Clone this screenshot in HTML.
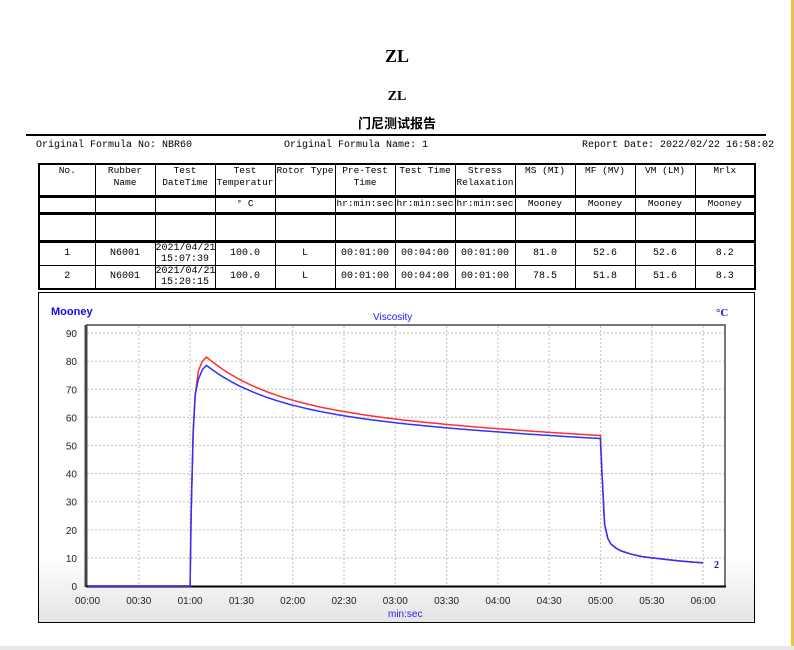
<!DOCTYPE html>
<html><head><meta charset="utf-8"><style>
*{margin:0;padding:0;box-sizing:border-box}
body{width:794px;height:650px;background:#fff;position:relative;overflow:hidden;font-family:"Liberation Mono","Noto Serif CJK SC",monospace;color:#000}
.abs{position:absolute}
.t1{left:0;width:794px;text-align:center;font-family:"Liberation Serif",serif;font-weight:bold}
table{position:absolute;left:38px;top:163px;width:717px;border-collapse:collapse;font-size:9.5px;table-layout:fixed}
td{border:1px solid #000;text-align:center;vertical-align:top;line-height:12px;overflow:hidden;white-space:nowrap;padding:0}
.thick{border-bottom:3px solid #000}
</style></head><body>
<div class="abs" style="right:0;top:0;width:3px;height:650px;background:#f0c040"></div>
<div class="abs" style="left:0;top:646px;width:794px;height:4px;background:#e8e8e8"></div>
<div class="abs t1" style="top:46px;font-size:18px">ZL</div>
<div class="abs t1" style="top:89px;font-size:14px">ZL</div>
<div class="abs t1" style="top:113px;font-size:13px;font-family:'Noto Sans CJK SC',sans-serif">门尼测试报告</div>
<div class="abs" style="left:26px;top:134px;width:740px;height:2px;background:#000"></div>
<div class="abs" style="left:36px;top:140px;font-size:10px">Original Formula No: NBR60</div>
<div class="abs" style="left:284px;top:140px;font-size:10px">Original Formula Name: 1</div>
<div class="abs" style="left:582px;top:140px;font-size:10px">Report Date: 2022/02/22 16:58:02</div>
<table style="border:2px solid #000">
<colgroup><col style="width:56px"><col style="width:60px"><col style="width:60px"><col style="width:60px"><col style="width:60px"><col style="width:60px"><col style="width:60px"><col style="width:60px"><col style="width:60px"><col style="width:60px"><col style="width:60px"><col style="width:60px"></colgroup>
<tr style="height:32px"><td class="thick">No.</td><td class="thick">Rubber<br>Name</td><td class="thick">Test<br>DateTime</td><td class="thick">Test<br>Temperatur</td><td class="thick">Rotor Type</td><td class="thick">Pre-Test<br>Time</td><td class="thick">Test Time</td><td class="thick">Stress<br>Relaxation</td><td class="thick">MS (MI)</td><td class="thick">MF (MV)</td><td class="thick">VM (LM)</td><td class="thick">Mrlx</td></tr>
<tr style="height:17px"><td class="thick"></td><td class="thick"></td><td class="thick"></td><td class="thick">° C</td><td class="thick"></td><td class="thick">hr:min:sec</td><td class="thick">hr:min:sec</td><td class="thick">hr:min:sec</td><td class="thick">Mooney</td><td class="thick">Mooney</td><td class="thick">Mooney</td><td class="thick">Mooney</td></tr>
<tr style="height:28px"><td class="thick"></td><td class="thick"></td><td class="thick"></td><td class="thick"></td><td class="thick"></td><td class="thick"></td><td class="thick"></td><td class="thick"></td><td class="thick"></td><td class="thick"></td><td class="thick"></td><td class="thick"></td></tr>
<tr style="height:24px;font-size:10px"><td style="vertical-align:middle">1</td><td style="vertical-align:middle">N6001</td><td style="line-height:11px">2021/04/21<br>15:07:39</td><td style="vertical-align:middle">100.0</td><td style="vertical-align:middle">L</td><td style="vertical-align:middle">00:01:00</td><td style="vertical-align:middle">00:04:00</td><td style="vertical-align:middle">00:01:00</td><td style="vertical-align:middle">81.0</td><td style="vertical-align:middle">52.6</td><td style="vertical-align:middle">52.6</td><td style="vertical-align:middle">8.2</td></tr>
<tr style="height:24px;font-size:10px"><td style="vertical-align:middle">2</td><td style="vertical-align:middle">N6001</td><td style="line-height:11px">2021/04/21<br>15:20:15</td><td style="vertical-align:middle">100.0</td><td style="vertical-align:middle">L</td><td style="vertical-align:middle">00:01:00</td><td style="vertical-align:middle">00:04:00</td><td style="vertical-align:middle">00:01:00</td><td style="vertical-align:middle">78.5</td><td style="vertical-align:middle">51.8</td><td style="vertical-align:middle">51.6</td><td style="vertical-align:middle">8.3</td></tr>
</table>
<svg class="abs" style="left:0;top:0" width="794" height="650" font-family="Liberation Sans,sans-serif">
<defs><linearGradient id="g" x1="0" y1="0" x2="0" y2="1"><stop offset="0.8" stop-color="#fff"/><stop offset="1" stop-color="#e4e4e4"/></linearGradient></defs>
<rect x="38.5" y="292.5" width="716" height="330" fill="url(#g)" stroke="#000"/>
<rect x="86" y="325" width="640" height="261" fill="#fff"/>
<g id="grid" stroke="#c8c8c8" stroke-width="1.2" stroke-dasharray="2,2"></g>
<line x1="86" y1="325" x2="726" y2="325" stroke="#777" stroke-width="2"/>
<line x1="725" y1="325" x2="725" y2="587" stroke="#777" stroke-width="2"/>
<line x1="86" y1="325" x2="86" y2="587" stroke="#444" stroke-width="3"/>
<line x1="86" y1="586.5" x2="726" y2="586.5" stroke="#000" stroke-width="2"/>
<g id="lab" font-size="10" fill="#222"></g>
<text x="51" y="315" font-size="11" font-weight="bold" fill="#1010e0">Mooney</text>
<text x="373" y="320" font-size="10" fill="#2020ff">Viscosity</text>
<text x="716" y="316" font-size="11" font-weight="bold" fill="#1010e0" font-family="Liberation Serif,serif">°C</text>
<text x="388" y="617" font-size="10" fill="#2020ff">min:sec</text>
<text x="714" y="568" font-size="10" font-weight="bold" fill="#1010e0" font-family="Liberation Serif,serif">2</text>
<path id="red" fill="none" stroke="#ff3030" stroke-width="1.5"/>
<path id="blue" fill="none" stroke="#3030ff" stroke-width="1.5"/>
</svg>
<script>
var X=function(t){return 87.5+t*102.6},Y=function(v){return 586-v*2.81};
var g=document.getElementById('grid'),l=document.getElementById('lab'),s='',s2='';
var names=['00:00','00:30','01:00','01:30','02:00','02:30','03:00','03:30','04:00','04:30','05:00','05:30','06:00'];
for(var i=0;i<13;i++){var x=X(i/2);if(i>0)s+='<line x1="'+x+'" y1="326" x2="'+x+'" y2="585"/>';s2+='<text x="'+x+'" y="604" text-anchor="middle">'+names[i]+'</text>';}
for(var v=10;v<=90;v+=10){s+='<line x1="87" y1="'+Y(v)+'" x2="724" y2="'+Y(v)+'"/>';}
for(var v=0;v<=90;v+=10){s2+='<text x="77" y="'+(Y(v)+4)+'" text-anchor="end">'+v+'</text>';}
g.innerHTML=s;l.innerHTML=s2;
function curve(peak,end,off){
 var pts=[[0,0],[1,0],[1.01,25],[1.03,55],[1.05,68],[1.08,peak-5],[1.12,peak-1.5],[1.16,peak]];
 for(var t=1.2;t<=5.0001;t+=0.04){
  var d=t-1.16;
  var v=end+(peak-end-6)*Math.exp(-d/0.55)*0.55+ (peak-end-6)*0.45*Math.exp(-d/1.6)+6*(5-t)/3.84;
  v=end+(v-end)*(1);
  pts.push([t,v]);
 }
 pts.push([5,end]);
 var tail=[[5.015,40],[5.04,22],[5.07,17],[5.1,15],[5.15,13.5],[5.2,12.5],[5.3,11.3],[5.4,10.5],[5.5,10],[5.6,9.6],[5.75,9],[5.9,8.5],[6,off]];
 return pts.concat(tail);
}
var R=curve(81.5,52.6,8.2),B=curve(78.5,51.6,8.3);
function p(a){return a.map(function(q,i){return (i?'L':'M')+X(q[0]).toFixed(1)+' '+Y(q[1]).toFixed(1)}).join('')}
document.getElementById('red').setAttribute('d',p(R));
document.getElementById('blue').setAttribute('d',p(B));
</script>
</body></html>
